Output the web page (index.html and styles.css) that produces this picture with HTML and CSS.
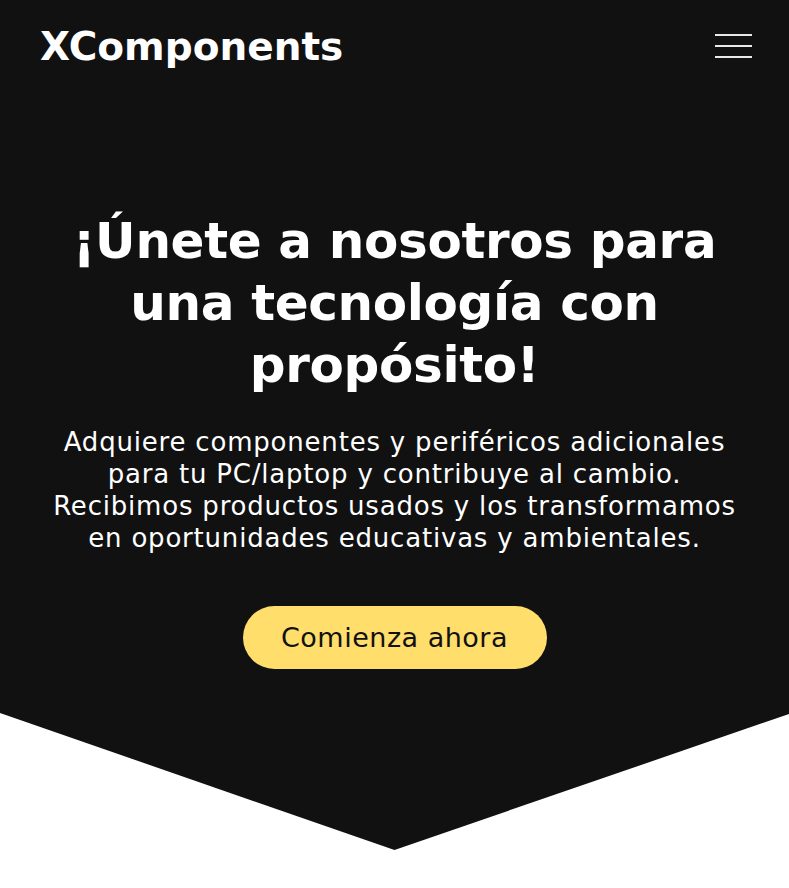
FILE: index.html
```html
<!DOCTYPE html>
<html lang="es">
<head>
<meta charset="utf-8">
<title>XComponents</title>
<link rel="stylesheet" href="styles.css">
</head>
<body>
<div class="hero-wrap">
  <header class="topbar">
    <a class="logo" href="#">XComponents</a>
    <button class="menu" aria-label="Menú">
      <span></span><span></span><span></span>
    </button>
  </header>
  <section class="hero">
    <h1 class="title">¡Únete a nosotros para<br>una tecnología con<br>propósito!</h1>
    <p class="lead">Adquiere componentes y periféricos adicionales<br>para tu PC/laptop y contribuye al cambio.<br>Recibimos productos usados y los transformamos<br>en oportunidades educativas y ambientales.</p>
    <a class="cta" href="#">Comienza ahora</a>
  </section>
</div>
</body>
</html>
```

FILE: styles.css
```css
* { box-sizing: border-box; }
html, body { margin: 0; padding: 0; background: #ffffff; }
body { font-family: "DejaVu Sans", "Noto Sans", sans-serif; }

.hero-wrap {
  background: #111111;
  color: #ffffff;
  height: 850px;
  clip-path: polygon(0 0, 100% 0, 100% 714px, 50% 100%, 0 713px);
}

.topbar {
  display: flex;
  justify-content: space-between;
  align-items: flex-start;
  padding: 22px 37px 0 40px;
  height: 94px;
}

.logo {
  color: #ffffff;
  text-decoration: none;
  font-weight: 700;
  font-size: 39px;
  line-height: 50px;
}

.menu {
  background: none;
  border: 0;
  padding: 0;
  margin-top: 12px;
  width: 37px;
  display: flex;
  flex-direction: column;
  gap: 9px;
  cursor: pointer;
}
.menu span {
  display: block;
  height: 2px;
  width: 37px;
  background: #e8e8e8;
}

.hero {
  display: flex;
  flex-direction: column;
  align-items: center;
  text-align: center;
  padding-top: 116px;
}

.title {
  margin: 0;
  font-size: 50px;
  line-height: 62px;
  font-weight: 700;
  letter-spacing: -0.35px;
}

.lead {
  margin: 30px 0 0;
  font-size: 26px;
  line-height: 32px;
  font-weight: 400;
  letter-spacing: 0.8px;
}

.cta {
  margin-top: 52px;
  display: flex;
  align-items: center;
  justify-content: center;
  width: 304px;
  height: 63px;
  border-radius: 32px;
  background: #ffde6b;
  color: #111111;
  text-decoration: none;
  font-size: 27px;
  letter-spacing: 0.5px;
}
```
